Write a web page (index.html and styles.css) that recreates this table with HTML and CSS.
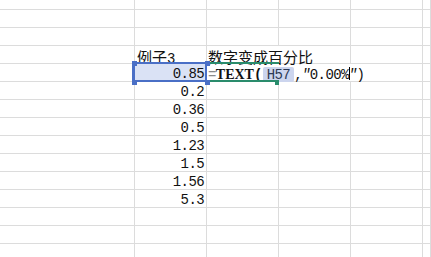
FILE: index.html
```html
<!DOCTYPE html>
<html lang="zh">
<head>
<meta charset="utf-8">
<title>Sheet</title>
<link rel="stylesheet" href="styles.css">
</head>
<body>
<div class="sheet">
  <div class="c"></div><div class="c"></div><div class="c"></div><div class="c"></div><div class="c"></div><div class="c"></div>
  <div class="c"></div><div class="c"></div><div class="c"></div><div class="c"></div><div class="c"></div><div class="c"></div>
  <div class="c"></div><div class="c"></div><div class="c"></div><div class="c"></div><div class="c"></div><div class="c"></div>

  <div class="c"></div>
  <div class="c"><span class="cjk">例子</span>3</div>
  <div class="c span2 txt"><span class="cjk">数字变成百分比</span></div>
  <div class="c"></div><div class="c"></div>

  <div class="c"></div>
  <div class="c num sel">0.85<div class="sel-frame"><span class="handle tl"></span><span class="handle tr"></span><span class="handle bl"></span><span class="handle br"></span></div></div>
  <div class="c span3 txt edit"><span class="eq">=</span><b class="fn">TEXT</b><b class="paren">(</b><span class="ref">H57</span>,<i class="q">"</i>0.00%<span class="caret"></span><i class="q">"</i>)<div class="ref-frame"></div><span class="ref-handle"></span></div>
  <div class="c"></div>

  <div class="c"></div><div class="c num">0.2</div><div class="c"></div><div class="c"></div><div class="c"></div><div class="c"></div>
  <div class="c"></div><div class="c num">0.36</div><div class="c"></div><div class="c"></div><div class="c"></div><div class="c"></div>
  <div class="c"></div><div class="c num">0.5</div><div class="c"></div><div class="c"></div><div class="c"></div><div class="c"></div>
  <div class="c"></div><div class="c num">1.23</div><div class="c"></div><div class="c"></div><div class="c"></div><div class="c"></div>
  <div class="c"></div><div class="c num">1.5</div><div class="c"></div><div class="c"></div><div class="c"></div><div class="c"></div>
  <div class="c"></div><div class="c num">1.56</div><div class="c"></div><div class="c"></div><div class="c"></div><div class="c"></div>
  <div class="c"></div><div class="c num">5.3</div><div class="c"></div><div class="c"></div><div class="c"></div><div class="c"></div>
  <div class="c"></div><div class="c"></div><div class="c"></div><div class="c"></div><div class="c"></div><div class="c"></div>
  <div class="c"></div><div class="c"></div><div class="c"></div><div class="c"></div><div class="c"></div><div class="c"></div>
  <div class="c"></div><div class="c"></div><div class="c"></div><div class="c"></div><div class="c"></div><div class="c"></div>
</div>
</body>
</html>
```
FILE: styles.css
```css
* { box-sizing: border-box; }
html, body { margin: 0; padding: 0; background: #fff; }
body { width: 431px; height: 257px; overflow: hidden; }

.sheet {
  display: grid;
  grid-template-columns: 135px 72px 72px 72px 72px 1fr;
  grid-template-rows: 10px;
  grid-auto-rows: 18px;
  width: 431px;
  height: 257px;
  overflow: hidden;
  font-family: "Liberation Mono", monospace;
  font-size: 14px;
  letter-spacing: -0.6px;
  line-height: 15px;
  color: #111;
}

.c {
  border-right: 1px solid #dcdcdc;
  border-bottom: 1px solid #dcdcdc;
  padding: 3px 2px 0 2px;
  white-space: nowrap;
}

.num { text-align: right; }
.txt { padding-left: 1px; }

.cjk {
  font-family: "Noto Sans CJK SC", sans-serif;
  font-size: 15px;
  letter-spacing: 0;
}

.span2 { grid-column: span 2; }
.span3 { grid-column: span 3; }

/* selected cell */
.sel {
  position: relative;
  z-index: 2;
  background: #dae2f5;
}
.sel-frame {
  position: absolute;
  top: -2px;
  left: -3px;
  right: -1px;
  bottom: -1px;
  border: 2px solid #4a6fc6;
  border-left-width: 3px;
}
.handle {
  position: absolute;
  width: 5px;
  height: 5px;
  background: #4a6fc6;
}
.handle.tl { left: -3px; top: -3px; }
.handle.tr { left: 70px; top: -3px; }
.handle.bl { left: -3px; top: 16px; }
.handle.br { left: 70px; top: 16px; }

/* cell being edited */
.edit { position: relative; z-index: 1; }
.ref-frame {
  position: absolute;
  left: 0;
  top: -2px;
  width: 72px;
  height: 20px;
  border-top: 2px solid #2a8c6c;
  border-bottom: 2px solid #2a8c6c;
}
.ref-handle {
  position: absolute;
  left: 68px;
  top: 17px;
  width: 4px;
  height: 4px;
  background: #2a8c6c;
}

.eq { color: #8a8a8a; }
.fn {
  font-family: "Liberation Serif", serif;
  font-size: 14px;
  font-weight: bold;
  letter-spacing: 0;
}
.paren { font-weight: bold; margin-right: 1px; }
.ref {
  display: inline-block;
  line-height: 13px;
  padding: 2px 4px 0 4px;
  background: #ccd5ee;
  border-radius: 2px;
  color: #2d3a55;
}
.q { font-style: italic; }
.caret {
  display: inline-block;
  width: 1px;
  height: 13px;
  margin-right: -1px;
  vertical-align: -1px;
  background: #000;
}
```
